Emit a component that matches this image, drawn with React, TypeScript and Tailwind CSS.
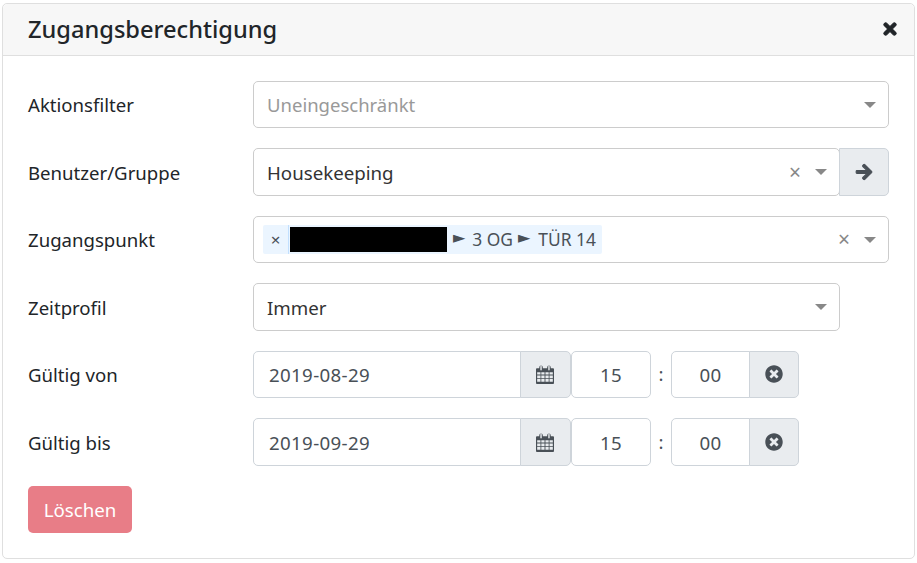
import { FaArrowRight, FaTimes, FaTimesCircle } from "react-icons/fa"

const font = "font-['Noto_Sans','Open_Sans',sans-serif]"

const Caret = ({ gap }: { gap?: boolean }) => (
  <span
    className={`h-0 w-0 border-x-[6.5px] border-t-[6px] border-x-transparent border-t-[#888] ${gap ? "ml-[14px]" : ""}`}
  />
)

const Clear = () => <span className="-ml-[2px] text-[21px] leading-none font-normal text-[#888]">×</span>

const Arrow = () => (
  <span className="-mt-[2px] font-['DejaVu_Sans',sans-serif] text-[16px] leading-none">►</span>
)

const CalendarIcon = () => (
  <svg width="18" height="19" viewBox="0 0 20 20" preserveAspectRatio="none" className="-ml-[2px] text-[#495057]">
    <path
      fill="currentColor"
      fillRule="evenodd"
      d="M1 3.5h2.6V2.6a2 2 0 0 1 4 0v.9h4.800V2.600a2 2 0 0 1 4 0v.9H19a1 1 0 0 1 1 1V19a1 1 0 0 1-1 1H1a1 1 0 0 1-1-1V4.500a1 1 0 0 1 1-1ZM4.800 1.700v3.400a.8.8 0 0 0 1.600 0V1.700a.8.8 0 0 0-1.600 0Zm8.800 0v3.400a.8.800 0 0 0 1.600 0V1.700a.8.800 0 0 0-1.600 0ZM1.300 7.500v2.600h3.700V7.500Zm4.600 0v2.600h3.600V7.500Zm4.600 0v2.600h3.600V7.500Zm4.500 0v2.600h3.700V7.500ZM1.300 11v2.600h3.700V11Zm4.600 0v2.600h3.600V11Zm4.600 0v2.600h3.600V11Zm4.500 0v2.600h3.700V11ZM1.300 14.500v3.200h3.700v-3.200Zm4.600 0v3.200h3.600v-3.200Zm4.600 0v3.200h3.600v-3.200Zm4.500 0v3.200h3.700v-3.200Z"
    />
  </svg>
)

const Row = ({ label, children }: { label: string; children: React.ReactNode }) => (
  <div className="flex h-[47.5px] items-center">
    <div className="w-[225px] shrink-0 pt-[1.5px] text-[18.6px] text-[#212529]">{label}</div>
    <div className="flex h-full min-w-0 flex-1">{children}</div>
  </div>
)

const DateRow = ({ label, date }: { label: string; date: string }) => (
  <Row label={label}>
    <div className="flex h-full w-[268px] items-center rounded-l-[5px] border border-[#ced4da] pt-[1.5px] pl-[15px] text-[18.7px] tracking-[0.35px] text-[#495057]">
      {date}
    </div>
    <div className="-ml-px flex h-full w-[51px] items-center justify-center rounded-r-[5px] border border-[#ced4da] bg-[#e9ecef]">
      <CalendarIcon />
    </div>
    <div className="flex h-full w-[80px] items-center justify-center rounded-[5px] border border-[#ced4da] pt-[1.5px] text-[18.7px] tracking-[0.35px] text-[#495057]">
      15
    </div>
    <div className="flex w-[20px] items-center justify-center text-[18.7px] text-[#495057]">:</div>
    <div className="flex h-full w-[79px] items-center justify-center rounded-l-[5px] border border-[#ced4da] pt-[1.5px] text-[18.7px] tracking-[0.35px] text-[#495057]">
      00
    </div>
    <div className="-ml-px flex h-full w-[50px] items-center justify-center rounded-r-[5px] border border-[#ced4da] bg-[#e9ecef] text-[#495057]">
      <FaTimesCircle size={18} className="-mt-px" />
    </div>
  </Row>
)

export default function App() {
  return (
    <div className={`${font} h-[563px] w-[917px] overflow-hidden bg-white pt-[3px] pr-[2px] pl-[2px]`}>
      <div className="h-[556px] rounded-[5px] border border-[#dfdfdf]">
        <div className="flex h-[52px] items-center justify-between rounded-t-[5px] border-b border-[#dfdfdf] bg-[#f7f7f7] pr-[15px] pl-[25px]">
          <h1 className="pt-px text-[23.6px] font-medium text-[#212529]">Zugangsberechtigung</h1>
          <FaTimes size={18} className="-mt-[2px] stroke-[#212529] stroke-[30px] text-[#212529]" />
        </div>

        <div className="flex flex-col gap-[20px] pt-[24.75px] pr-[25px] pl-[25px]">
          <Row label="Aktionsfilter">
            <div className="flex h-full flex-1 items-center justify-between rounded-[5px] border border-[#ccc] pr-[12px] pl-[13px] text-[18.5px] text-[#999]">
              <span className="pt-[1.5px]">Uneingeschränkt</span>
              <Caret />
            </div>
          </Row>

          <Row label="Benutzer/Gruppe">
            <div className="flex h-full w-[587px] items-center rounded-[5px] border border-[#ccc] pr-[12px] pl-[13px] text-[18.7px] text-[#333]">
              <span className="flex-1 pt-[1.5px]">Housekeeping</span>
              <Clear />
              <Caret gap />
            </div>
            <div className="-ml-px flex h-full w-[50px] items-center justify-center rounded-r-[5px] border border-[#ced4da] bg-[#e9ecef] text-[#495057]">
              <FaArrowRight size={18} className="stroke-[#495057] stroke-[30px]" />
            </div>
          </Row>

          <Row label="Zugangspunkt">
            <div className="flex h-full flex-1 items-center rounded-[5px] border border-[#ccc] pr-[12px] pl-[9px] text-[#333]">
              <div className="flex h-[29px] flex-1 items-center">
                <div className="flex h-full items-center rounded-[2px] bg-[#ebf5ff] text-[17.4px] text-[#495057]">
                  <span className="flex h-full w-[26px] items-center justify-center border-r border-[#c2e0ff] text-[17px]">
                    ×
                  </span>
                  <span className="ml-[1px] h-[25px] w-[157px] bg-black" />
                  <span className="flex items-center pr-[6px] pl-[6px]">
                    <Arrow />
                    <span className="ml-[7px]">3 OG</span>
                    <span className="mr-[8px] ml-[5px] flex items-center">
                      <Arrow />
                    </span>
                    TÜR 14
                  </span>
                </div>
              </div>
              <Clear />
              <Caret gap />
            </div>
          </Row>

          <Row label="Zeitprofil">
            <div className="flex h-full w-[587px] items-center justify-between rounded-[5px] border border-[#ccc] pr-[12px] pl-[13px] text-[18.7px] text-[#333]">
              <span className="pt-[1.5px]">Immer</span>
              <Caret />
            </div>
          </Row>

          <DateRow label="Gültig von" date="2019-08-29" />
          <DateRow label="Gültig bis" date="2019-09-29" />

          <button className="flex h-[47px] w-[104px] items-center justify-center rounded-[5px] bg-[#e87d87] pt-px text-[18.7px] text-white">
            Löschen
          </button>
        </div>
      </div>
    </div>
  )
}
